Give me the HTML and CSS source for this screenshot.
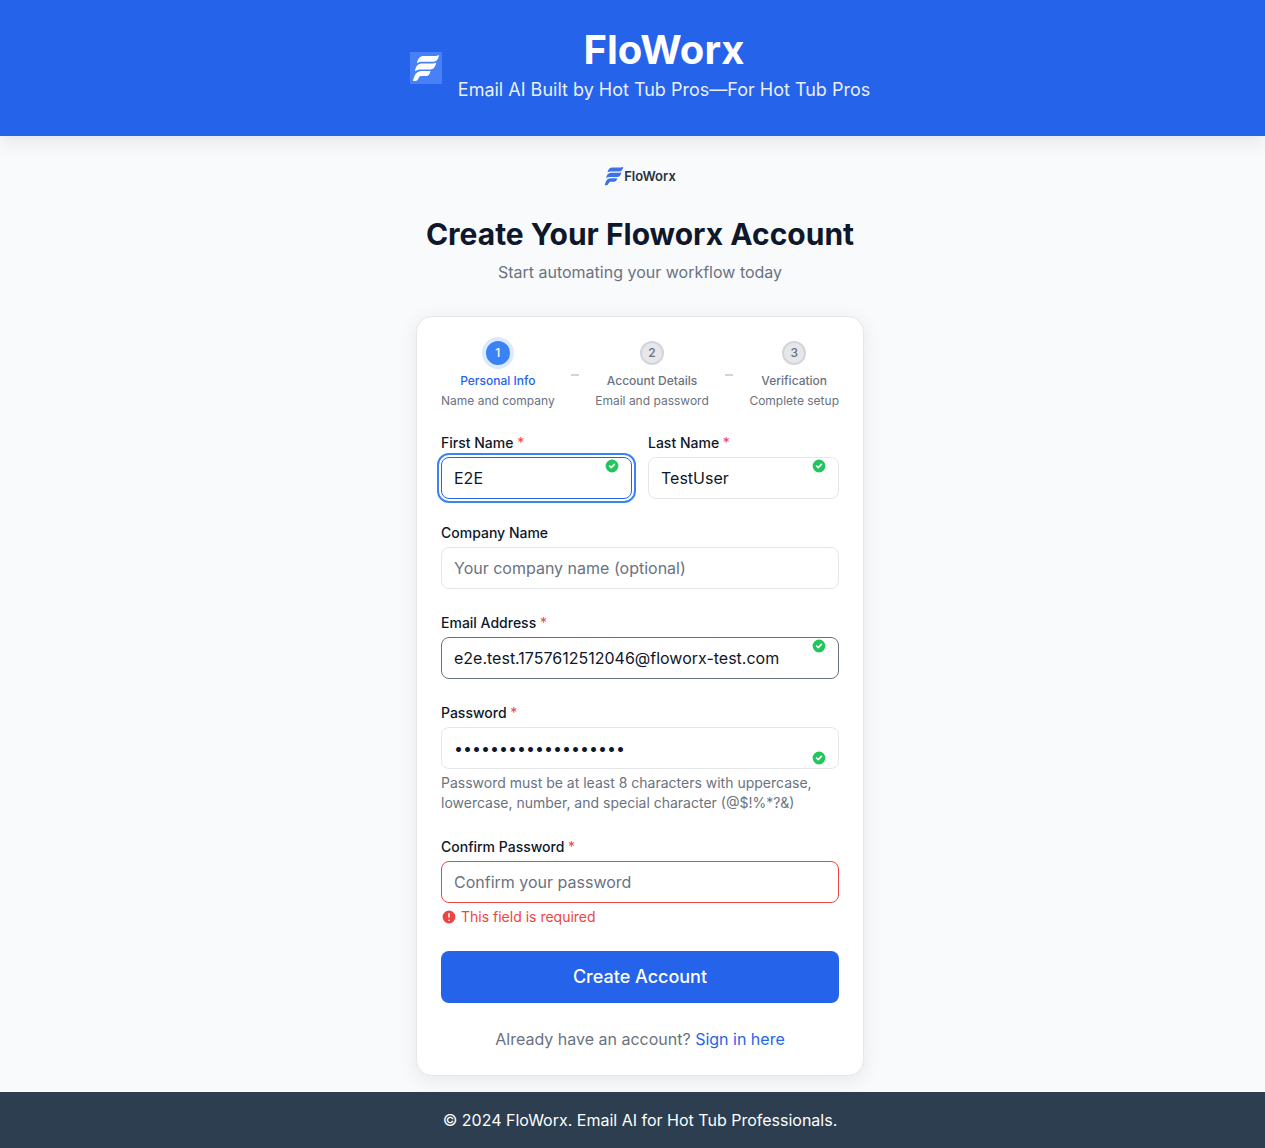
FILE: index.html
```html
<!DOCTYPE html>
<html lang="en">
<head>
<meta charset="utf-8">
<meta name="viewport" content="width=device-width, initial-scale=1">
<title>FloWorx - Create Account</title>
<link rel="stylesheet" href="styles.css">
</head>
<body>
<svg class="sprite" aria-hidden="true">
  <symbol id="mark" viewBox="2 2 28 28">
    <path d="M7 11.500C7.500 6.500 10 4 14 4H24C26.500 4 28 3.500 29 3C28.500 7 26.500 9.800 23 9.800H13C10.500 9.800 8.500 10 7 11.500Z"/>
    <path d="M5 19.500C5.500 14.500 8 11.600 11.500 11.600H21C23.500 11.600 25 11.300 26.300 10.600C25.500 14.500 24 17.400 20.500 17.400H11C8.500 17.400 6.500 17.800 5 19.500Z"/>
    <path d="M3 29C4 25 5 21 9 19.500C10 19 12 19 14 19H20.500C20 22 18.500 24 16 24H11.500C9 24 9 26 7.500 28C6.500 29.300 5 29 3 29Z"/>
  </symbol>
  <symbol id="check" viewBox="0 0 20 20">
    <path fill-rule="evenodd" d="M10 18a8 8 0 100-16 8 8 0 000 16zm3.707-9.293a1 1 0 00-1.414-1.414L9 10.586 7.707 9.293a1 1 0 00-1.414 1.414l2 2a1 1 0 001.414 0l4-4z"/>
  </symbol>
  <symbol id="alert" viewBox="0 0 20 20">
    <path fill-rule="evenodd" d="M18 10a8 8 0 11-16 0 8 8 0 0116 0zm-7 4a1 1 0 11-2 0 1 1 0 012 0zm-1-9a1 1 0 00-1 1v4a1 1 0 102 0V6a1 1 0 00-1-1z"/>
  </symbol>
</svg>

<header class="site-header">
  <svg class="site-icon" aria-hidden="true"><use href="#mark"/></svg>
  <div class="site-heading">
    <h1>FloWorx</h1>
    <p>Email AI Built by Hot Tub Pros—For Hot Tub Pros</p>
  </div>
</header>

<main class="page">
  <div class="brand">
    <svg class="brand-mark" aria-hidden="true"><use href="#mark"/></svg>
    <span>FloWorx</span>
  </div>
  <h2 class="title">Create Your Floworx Account</h2>
  <p class="subtitle">Start automating your workflow today</p>

  <form class="card">
    <ol class="steps">
      <li class="step step-current">
        <span class="step-number">1</span>
        <span class="step-name">Personal Info</span>
        <span class="step-note">Name and company</span>
      </li>
      <li class="connector" aria-hidden="true"></li>
      <li class="step">
        <span class="step-number">2</span>
        <span class="step-name">Account Details</span>
        <span class="step-note">Email and password</span>
      </li>
      <li class="connector" aria-hidden="true"></li>
      <li class="step">
        <span class="step-number">3</span>
        <span class="step-name">Verification</span>
        <span class="step-note">Complete setup</span>
      </li>
    </ol>

    <div class="field-row">
      <div class="field">
        <label for="first">First Name <span class="required">*</span></label>
        <div class="control">
          <input class="current" id="first" type="text" value="E2E">
          <svg class="valid" aria-hidden="true"><use href="#check"/></svg>
        </div>
      </div>
      <div class="field">
        <label for="last">Last Name <span class="required">*</span></label>
        <div class="control">
          <input id="last" type="text" value="TestUser">
          <svg class="valid" aria-hidden="true"><use href="#check"/></svg>
        </div>
      </div>
    </div>

    <div class="field">
      <label for="company">Company Name</label>
      <input id="company" type="text" placeholder="Your company name (optional)">
    </div>

    <div class="field">
      <label for="email">Email Address <span class="required">*</span></label>
      <div class="control">
        <input class="strong" id="email" type="email" value="e2e.test.1757612512046@floworx-test.com">
        <svg class="valid" aria-hidden="true"><use href="#check"/></svg>
      </div>
    </div>

    <div class="field">
      <label for="password">Password <span class="required">*</span></label>
      <div class="control">
        <input id="password" type="password" value="TestPassword123!@#$" aria-describedby="password-hint">
        <svg class="valid valid-low" aria-hidden="true"><use href="#check"/></svg>
      </div>
      <p class="hint" id="password-hint">Password must be at least 8 characters with uppercase, lowercase, number, and special character (@$!%*?&amp;)</p>
    </div>

    <div class="field">
      <label for="confirm">Confirm Password <span class="required">*</span></label>
      <input class="invalid" id="confirm" type="password" placeholder="Confirm your password" aria-describedby="confirm-error">
      <p class="error" id="confirm-error"><svg aria-hidden="true"><use href="#alert"/></svg>This field is required</p>
    </div>

    <button class="submit" type="submit">Create Account</button>
    <p class="signin">Already have an account? <a href="#signin">Sign in here</a></p>
  </form>
</main>

<footer class="site-footer">© 2024 FloWorx. Email AI for Hot Tub Professionals.</footer>
</body>
</html>
```
FILE: styles.css
```css
*, *::before, *::after { box-sizing: border-box; }

body {
  --gutter: 15px;
  margin: 0;
  min-height: 100vh;
  display: flex;
  flex-direction: column;
  background: #f8fafc;
  color: #0f172a;
  font: 16px/24px Inter, "Liberation Sans", sans-serif;
}

h1, h2, p, ol { margin: 0; padding: 0; }
.sprite { display: none; }

.site-header {
  display: flex;
  align-items: center;
  justify-content: center;
  gap: 16px;
  padding: 24px 0 24px var(--gutter);
  background: #2563eb;
  color: #fff;
  text-align: center;
  box-shadow: 0 4px 20px rgba(0, 0, 0, 0.1);
}
.site-icon {
  width: 32px;
  height: 32px;
  padding: 2px;
  background: #4780f7;
  fill: #fff;
}
.site-heading h1 { font-size: 40px; line-height: 52px; font-weight: 700; }
.site-heading p {
  margin-bottom: 8px;
  font-size: 18px;
  line-height: 28px;
  opacity: 0.9;
}

.page {
  flex: 1;
  display: flex;
  flex-direction: column;
  align-items: center;
  padding: 24px 0 16px var(--gutter);
}
.brand {
  display: flex;
  align-items: center;
  height: 32px;
  font-size: 13px;
  font-weight: 600;
  color: #27343f;
}
.brand-mark { width: 20px; height: 20px; fill: #3b72e8; }
.title { margin-top: 24px; font-size: 30px; line-height: 36px; font-weight: 700; }
.subtitle { margin-top: 8px; color: #6b7280; }

.card {
  display: flex;
  flex-direction: column;
  gap: 24px;
  width: 100%;
  max-width: 448px;
  margin-top: 32px;
  padding: 24px;
  background: #fff;
  border: 1px solid #e5e7eb;
  border-radius: 16px;
  box-shadow: 0 4px 20px rgba(0, 0, 0, 0.08);
}

.steps {
  display: flex;
  align-items: center;
  justify-content: space-between;
  list-style: none;
  font-size: 12px;
  line-height: 16px;
  color: #6b7280;
  white-space: nowrap;
}
.step { display: flex; flex-direction: column; align-items: center; }
.step-number {
  display: grid;
  place-items: center;
  width: 24px;
  height: 24px;
  margin-bottom: 8px;
  border: 2px solid #d1d5db;
  border-radius: 50%;
  background: #e5e7eb;
  font-weight: 500;
}
.step-name { margin-bottom: 4px; font-weight: 500; }
.step-current .step-number {
  border-color: #3b82f6;
  background: #3b82f6;
  color: #fff;
  box-shadow: 0 0 0 4px #dbeafe;
}
.step-current .step-name { color: #2563eb; }
.connector { width: 8px; height: 2px; background: #d1d5db; }

.field-row { display: grid; grid-template-columns: 1fr 1fr; gap: 16px; }
.field { display: flex; flex-direction: column; gap: 4px; min-width: 0; }
.field label { font-size: 14px; line-height: 20px; font-weight: 500; }
.required { color: #ef4444; font-weight: 400; }
.control { position: relative; }

input {
  display: block;
  width: 100%;
  height: 42px;
  padding: 8px 12px;
  border: 1px solid #e5e7eb;
  border-radius: 8px;
  background: #fff;
  color: #0f172a;
  font: inherit;
}
input::placeholder { color: #6b7280; opacity: 1; }
input.strong { border-color: #6b7280; }
input.invalid { border-color: #ef4444; }
input.current, input:focus {
  border-color: #2563eb;
  outline: 2px solid #3b82f6;
  outline-offset: 2px;
}

.valid {
  position: absolute;
  top: 1px;
  right: 12px;
  width: 16px;
  height: 16px;
  fill: #22c55e;
}
.valid-low { top: auto; bottom: 3px; }
.hint { font-size: 14px; line-height: 20px; color: #6b7280; }
.error {
  display: flex;
  align-items: center;
  gap: 4px;
  font-size: 14px;
  line-height: 20px;
  color: #ef4444;
}
.error svg { width: 16px; height: 16px; fill: currentColor; }

.submit {
  height: 52px;
  border: 0;
  border-radius: 8px;
  background: #2563eb;
  color: #fff;
  font: 500 18px/28px Inter, "Liberation Sans", sans-serif;
  cursor: pointer;
}
.signin { text-align: center; color: #6b7280; }
.signin a { color: #2563eb; text-decoration: none; }

.site-footer {
  padding: 16px 0 16px var(--gutter);
  background: #2c3e50;
  color: #fff;
  text-align: center;
}
```
